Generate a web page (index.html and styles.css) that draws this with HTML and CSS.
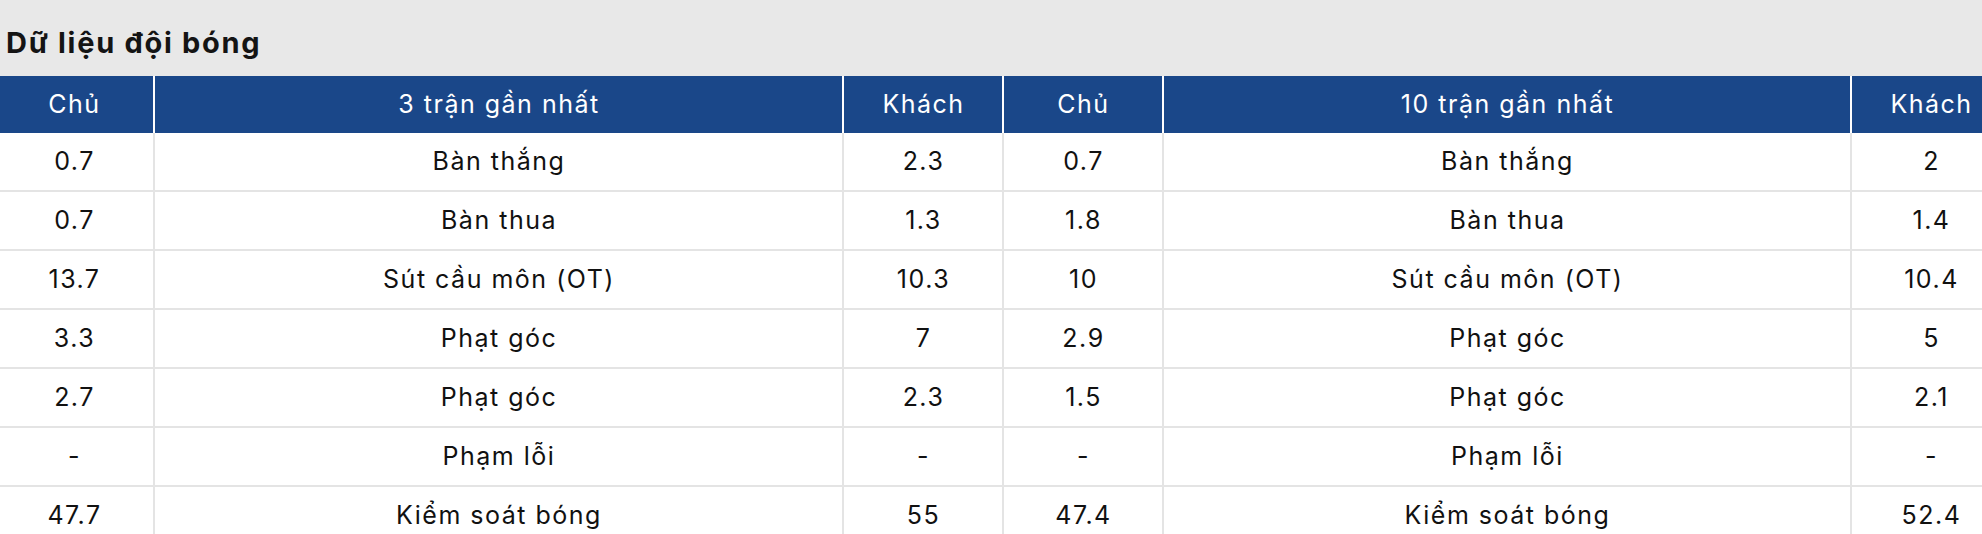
FILE: index.html
```
<!DOCTYPE html>
<html lang="vi">
<head>
<meta charset="utf-8">
<title>Dữ liệu đội bóng</title>
<link rel="stylesheet" href="styles.css">
</head>
<body>
<div class="panel">
  <h2 class="title">Dữ liệu đội bóng</h2>
  <div class="scroller">
    <div class="grid" role="table">
      <div class="hd">Chủ</div><div class="hd">3 trận gần nhất</div><div class="hd">Khách</div><div class="hd">Chủ</div><div class="hd">10 trận gần nhất</div><div class="hd">Khách</div>

      <div class="cell">0.7</div><div class="cell">Bàn thắng</div><div class="cell">2.3</div><div class="cell">0.7</div><div class="cell">Bàn thắng</div><div class="cell">2</div>
      <div class="cell">0.7</div><div class="cell">Bàn thua</div><div class="cell">1.3</div><div class="cell">1.8</div><div class="cell">Bàn thua</div><div class="cell">1.4</div>
      <div class="cell">13.7</div><div class="cell">Sút cầu môn (OT)</div><div class="cell">10.3</div><div class="cell">10</div><div class="cell">Sút cầu môn (OT)</div><div class="cell">10.4</div>
      <div class="cell">3.3</div><div class="cell">Phạt góc</div><div class="cell">7</div><div class="cell">2.9</div><div class="cell">Phạt góc</div><div class="cell">5</div>
      <div class="cell">2.7</div><div class="cell">Phạt góc</div><div class="cell">2.3</div><div class="cell">1.5</div><div class="cell">Phạt góc</div><div class="cell">2.1</div>
      <div class="cell">-</div><div class="cell">Phạm lỗi</div><div class="cell">-</div><div class="cell">-</div><div class="cell">Phạm lỗi</div><div class="cell">-</div>
      <div class="cell">47.7</div><div class="cell">Kiểm soát bóng</div><div class="cell">55</div><div class="cell">47.4</div><div class="cell">Kiểm soát bóng</div><div class="cell">52.4</div>
    </div>
  </div>
</div>
</body>
</html>
```

FILE: styles.css
```
html, body {
  margin: 0;
  padding: 0;
  overflow: hidden;
  background: #ffffff;
}

body {
  font-family: Inter, "Noto Sans", "Liberation Sans", sans-serif;
  color: #111111;
}

.panel {
  background: #e8e8e8;
}

.title {
  margin: 0;
  padding: 26px 6px 16px;
  font-size: 29px;
  line-height: 34px;
  font-weight: 700;
  letter-spacing: 1.7px;
  color: #141414;
}

.scroller {
  overflow: hidden;
}

.grid {
  display: grid;
  grid-template-columns: 160px 689px 160px 160px 688px 160px;
  width: max-content;
  margin-left: -5px;
  background: #ffffff;
}

.hd,
.cell {
  box-sizing: border-box;
  text-align: center;
  font-size: 25px;
  letter-spacing: 1.5px;
  padding-left: 1px;
  white-space: nowrap;
  border-right: 2px solid #e4e4e4;
}

.hd {
  height: 57px;
  line-height: 57px;
  background: #1a4789;
  color: #ffffff;
  border-right-color: #ffffff;
}

.cell {
  height: 59px;
  line-height: 57px;
  border-bottom: 2px solid #e4e4e4;
  color: #111111;
}
```
